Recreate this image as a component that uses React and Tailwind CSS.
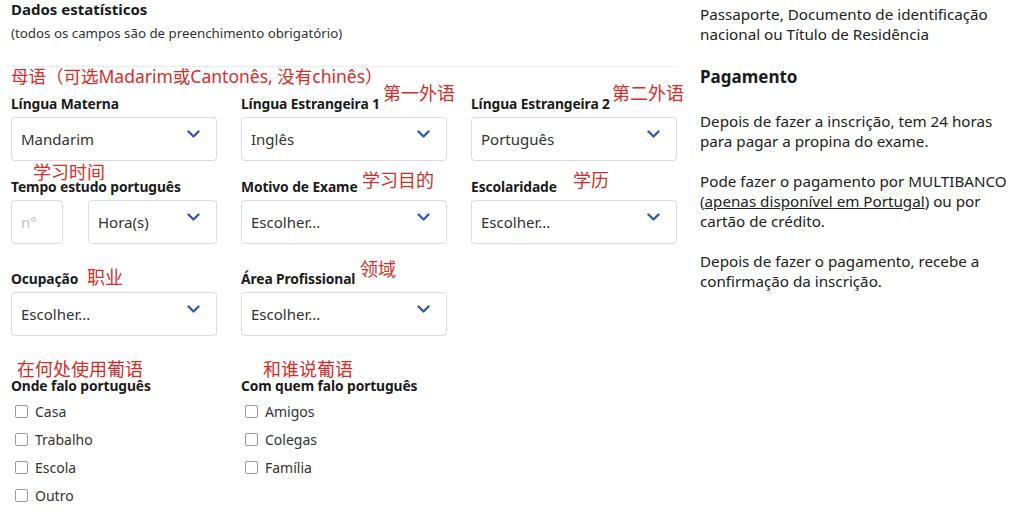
import React from 'react';

const FONT = { fontFamily: '"Noto Sans", "Noto Sans CJK SC", sans-serif' };

const Chevron = () => (
  <svg width="13" height="9" viewBox="0 0 13 9" className="shrink-0">
    <path d="M1.5 1.5 L6.5 6.5 L11.5 1.5" fill="none" stroke="#2f5cb0" strokeWidth="2.4" strokeLinecap="round" strokeLinejoin="round" />
  </svg>
);

const Select = ({ value, className = '' }) => (
  <div className={`h-[44px] border border-[#dcdcdc] rounded-[4px] bg-white flex items-center justify-between pl-[9px] pr-[16px] ${className}`}>
    <span className="text-[15px] text-[#333] pt-[1px]">{value}</span>
    <span className="-mt-[10px]"><Chevron /></span>
  </div>
);

const Label = ({ children }) => (
  <div className="text-[13.8px] leading-[18px] font-bold text-[#1b1b1b] tracking-[-0.1px]">{children}</div>
);

const Check = ({ label }) => (
  <div className="h-[28px] flex items-center gap-[7px] pl-[4px]">
    <span className="w-[13px] h-[13px] border border-[#9a9a9a] rounded-[2px] bg-white" />
    <span className="text-[14px] text-[#333]">{label}</span>
  </div>
);

// red hand-written annotations lying over the form
const Note = ({ children, className }) => (
  <span className={`absolute text-[#d62d2a] whitespace-nowrap leading-none ${className}`}>{children}</span>
);

export default function App() {
  return (
    <div style={FONT} className="w-[1013px] h-[531px] bg-white flex overflow-hidden">
      <div className="relative w-[680px] pl-[11px] pr-[3px]">
        <div className="text-[15px] leading-[18px] font-bold text-[#1b1b1b]">Dados estatísticos</div>
        <div className="mt-[6px] text-[13.3px] leading-[18px] text-[#333]">(todos os campos são de preenchimento obrigatório)</div>
        <div className="mt-[24px] h-px bg-[#eeeeee]" />

        <div className="mt-[28px] grid grid-cols-3 gap-x-[24px]">
          <div>
            <Label>Língua Materna</Label>
            <Select value="Mandarim" className="mt-[4px]" />
          </div>
          <div>
            <Label>Língua Estrangeira 1</Label>
            <Select value="Inglês" className="mt-[4px]" />
          </div>
          <div>
            <Label>Língua Estrangeira 2</Label>
            <Select value="Português" className="mt-[4px]" />
          </div>
        </div>

        <div className="mt-[17px] grid grid-cols-3 gap-x-[24px]">
          <div>
            <Label>Tempo estudo português</Label>
            <div className="mt-[4px] flex gap-[25px]">
              <div className="w-[52px] h-[44px] border border-[#dcdcdc] rounded-[4px] flex items-center pl-[9px] text-[15px] text-[#c4c4c4]">n°</div>
              <Select value="Hora(s)" className="flex-1" />
            </div>
          </div>
          <div>
            <Label>Motivo de Exame</Label>
            <Select value="Escolher..." className="mt-[4px]" />
          </div>
          <div>
            <Label>Escolaridade</Label>
            <Select value="Escolher..." className="mt-[4px]" />
          </div>
        </div>

        <div className="mt-[26px] grid grid-cols-3 gap-x-[24px]">
          <div>
            <Label>Ocupação</Label>
            <Select value="Escolher..." className="mt-[4px]" />
          </div>
          <div>
            <Label>Área Profissional</Label>
            <Select value="Escolher..." className="mt-[4px]" />
          </div>
        </div>

        <div className="mt-[41px] grid grid-cols-3 gap-x-[24px]">
          <div>
            <Label>Onde falo português</Label>
            <div className="mt-[2px]">
              <Check label="Casa" />
              <Check label="Trabalho" />
              <Check label="Escola" />
              <Check label="Outro" />
            </div>
          </div>
          <div>
            <Label>Com quem falo português</Label>
            <div className="mt-[2px]">
              <Check label="Amigos" />
              <Check label="Colegas" />
              <Check label="Família" />
            </div>
          </div>
        </div>

        <Note className="left-[11px] top-[68px] text-[17.5px]">母语（可选Madarim或Cantonês, 没有chinês）</Note>
        <Note className="left-[383px] top-[84px] text-[18px]">第一外语</Note>
        <Note className="left-[612px] top-[84px] text-[18px]">第二外语</Note>
        <Note className="left-[33px] top-[163px] text-[18px]">学习时间</Note>
        <Note className="left-[362px] top-[171px] text-[18px]">学习目的</Note>
        <Note className="left-[573px] top-[171px] text-[18px]">学历</Note>
        <Note className="left-[87px] top-[268px] text-[18px]">职业</Note>
        <Note className="left-[360px] top-[260px] text-[18px]">领域</Note>
        <Note className="left-[17px] top-[360px] text-[18px]">在何处使用葡语</Note>
        <Note className="left-[263px] top-[360px] text-[18px]">和谁说葡语</Note>
      </div>

      <div className="flex-1 pl-[20px] pt-[4px] text-[15.2px] leading-[20px] text-[#222]">
        <p>Passaporte, Documento de identificação<br />nacional ou Título de Residência</p>
        <h2 className="mt-[22px] text-[17px] leading-[22px] font-bold text-[#1b1b1b]">Pagamento</h2>
        <p className="mt-[23px]">Depois de fazer a inscrição, tem 24 horas<br />para pagar a propina do exame.</p>
        <p className="mt-[20px]">Pode fazer o pagamento por MULTIBANCO<br />(<span className="underline">apenas disponível em Portugal</span>) ou por<br />cartão de crédito.</p>
        <p className="mt-[20px]">Depois de fazer o pagamento, recebe a<br />confirmação da inscrição.</p>
      </div>
    </div>
  );
}
